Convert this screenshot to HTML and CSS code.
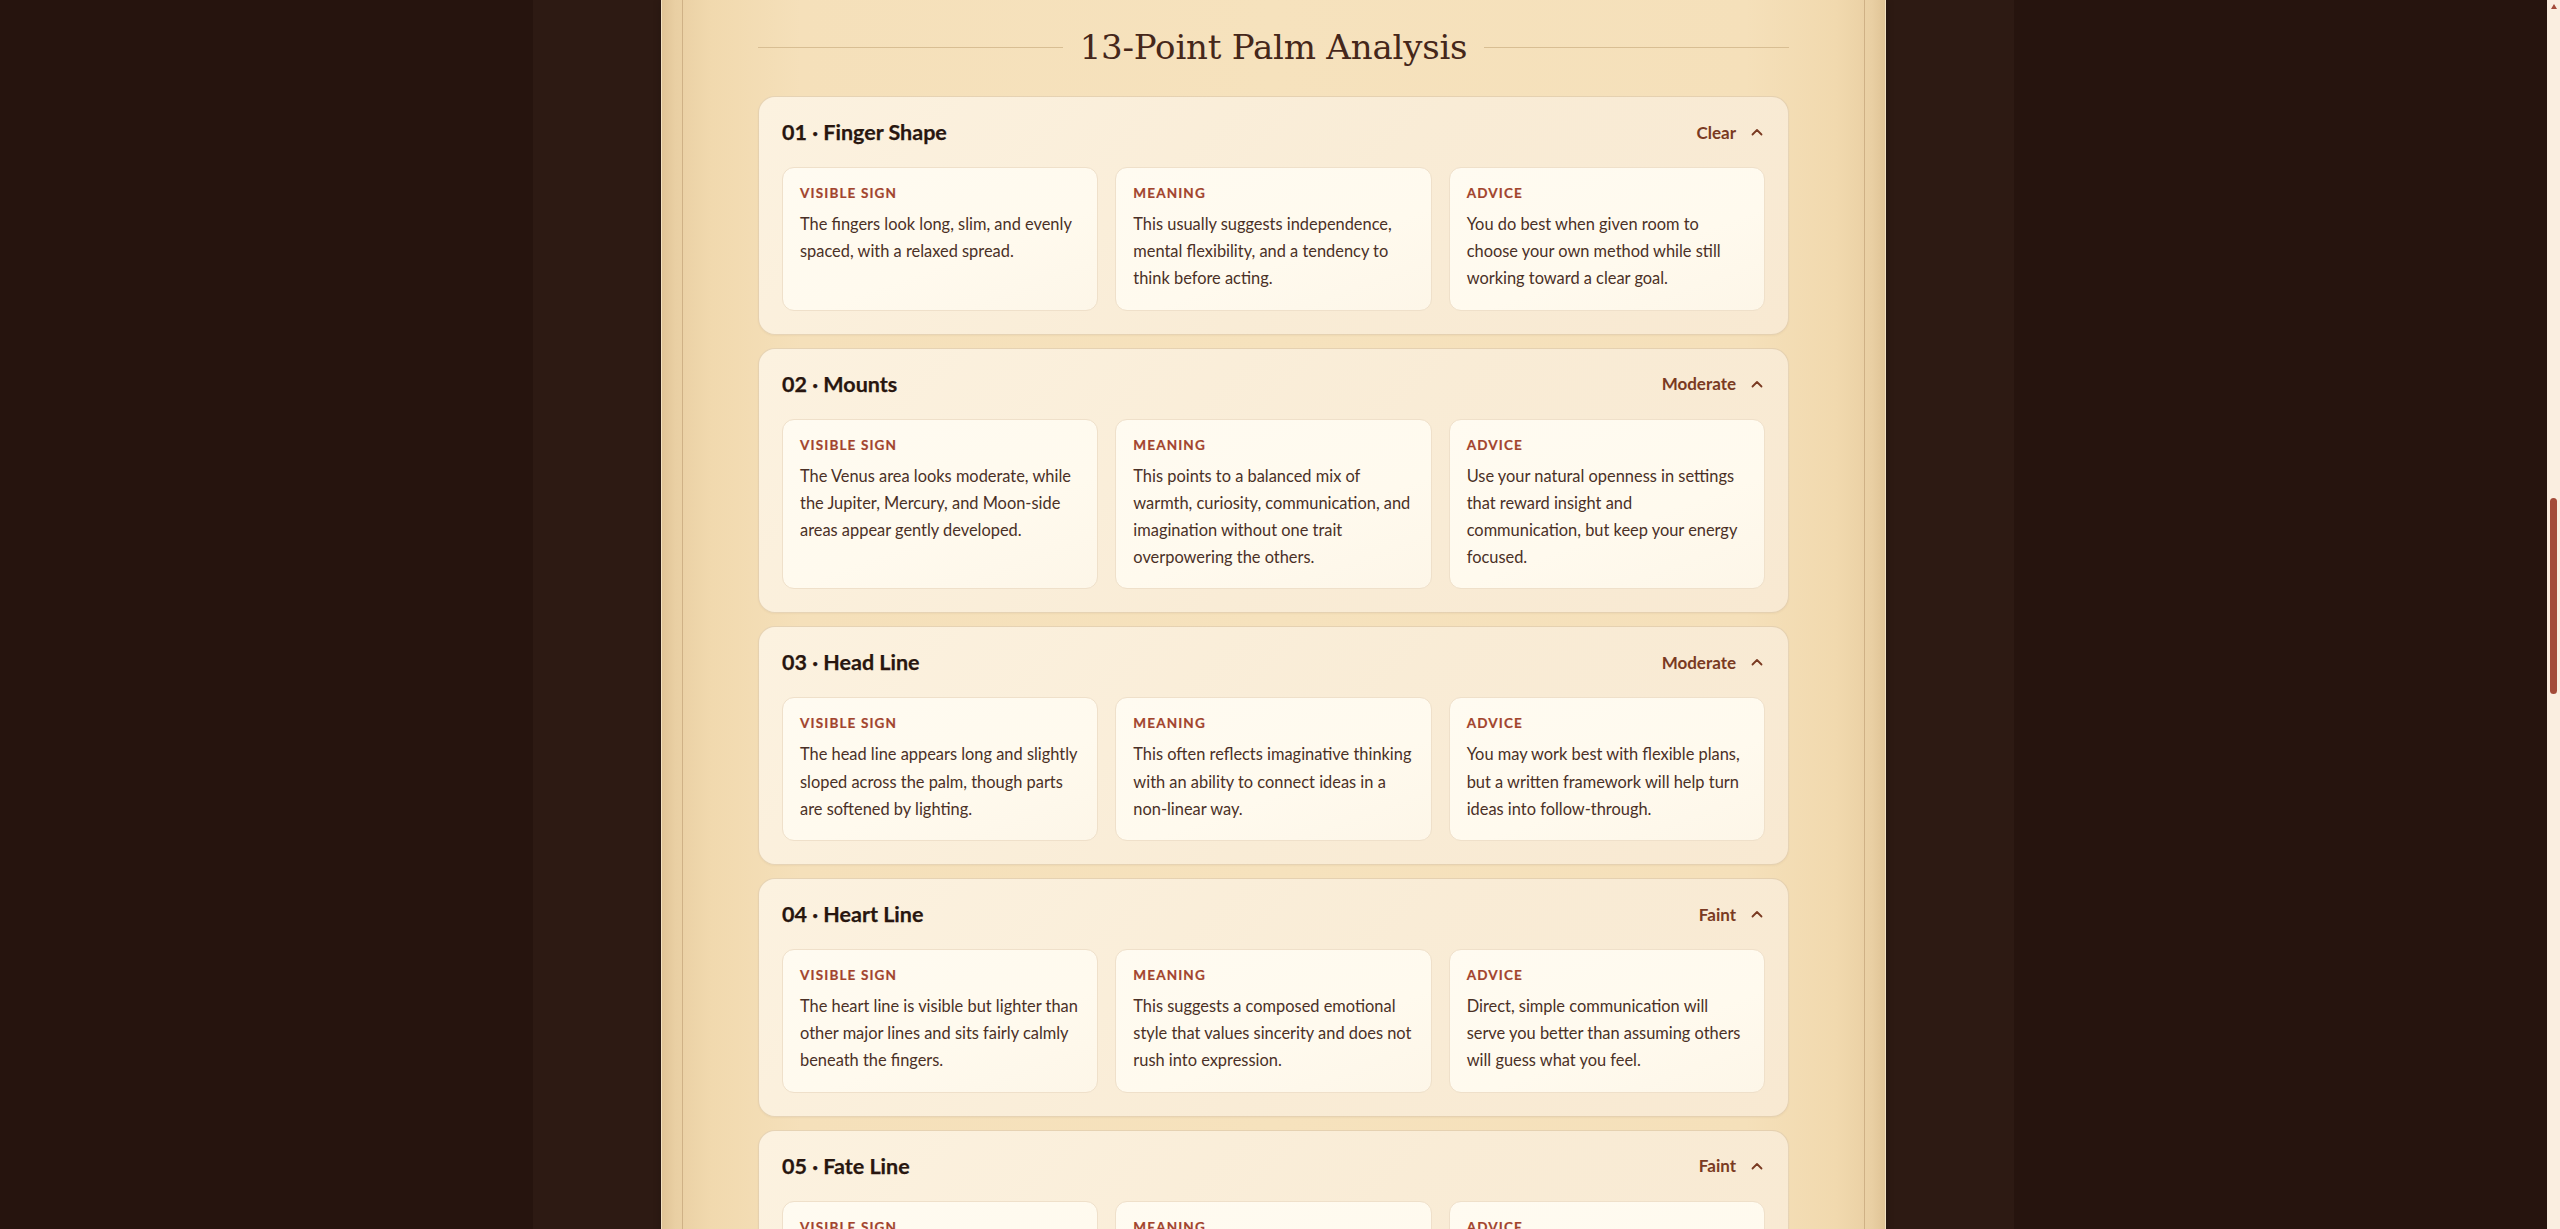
FILE: index.html
```html
<!DOCTYPE html>
<html lang="en">
<head>
<meta charset="utf-8">
<title>13-Point Palm Analysis</title>
<link rel="stylesheet" href="styles.css">
</head>
<body>
<div class="viewport">
  <div class="page">
    <main class="panel">
      <div class="panel-inner">
        <div class="section-title">
          <span class="rule"></span>
          <h2>13-Point Palm Analysis</h2>
          <span class="rule"></span>
        </div>

        <div class="points">
          <section class="point">
            <div class="point-head">
              <h3>01 · Finger Shape</h3>
              <div class="state"><span>Clear</span><svg class="chev" viewBox="0 0 12 8" width="12" height="8"><path d="M1.5 6.5 L6 2 L10.5 6.5"/></svg></div>
            </div>
            <div class="point-grid">
              <div class="cell"><div class="label">Visible Sign</div><p>The fingers look long, slim, and evenly spaced, with a relaxed spread.</p></div>
              <div class="cell"><div class="label">Meaning</div><p>This usually suggests independence, mental flexibility, and a tendency to think before acting.</p></div>
              <div class="cell"><div class="label">Advice</div><p>You do best when given room to choose your own method while still working toward a clear goal.</p></div>
            </div>
          </section>

          <section class="point">
            <div class="point-head">
              <h3>02 · Mounts</h3>
              <div class="state"><span>Moderate</span><svg class="chev" viewBox="0 0 12 8" width="12" height="8"><path d="M1.5 6.5 L6 2 L10.5 6.5"/></svg></div>
            </div>
            <div class="point-grid">
              <div class="cell"><div class="label">Visible Sign</div><p>The Venus area looks moderate, while the Jupiter, Mercury, and Moon-side areas appear gently developed.</p></div>
              <div class="cell"><div class="label">Meaning</div><p>This points to a balanced mix of warmth, curiosity, communication, and imagination without one trait overpowering the others.</p></div>
              <div class="cell"><div class="label">Advice</div><p>Use your natural openness in settings that reward insight and communication, but keep your energy focused.</p></div>
            </div>
          </section>

          <section class="point">
            <div class="point-head">
              <h3>03 · Head Line</h3>
              <div class="state"><span>Moderate</span><svg class="chev" viewBox="0 0 12 8" width="12" height="8"><path d="M1.5 6.5 L6 2 L10.5 6.5"/></svg></div>
            </div>
            <div class="point-grid">
              <div class="cell"><div class="label">Visible Sign</div><p>The head line appears long and slightly sloped across the palm, though parts are softened by lighting.</p></div>
              <div class="cell"><div class="label">Meaning</div><p>This often reflects imaginative thinking with an ability to connect ideas in a non-linear way.</p></div>
              <div class="cell"><div class="label">Advice</div><p>You may work best with flexible plans, but a written framework will help turn ideas into follow-through.</p></div>
            </div>
          </section>

          <section class="point">
            <div class="point-head">
              <h3>04 · Heart Line</h3>
              <div class="state"><span>Faint</span><svg class="chev" viewBox="0 0 12 8" width="12" height="8"><path d="M1.5 6.5 L6 2 L10.5 6.5"/></svg></div>
            </div>
            <div class="point-grid">
              <div class="cell"><div class="label">Visible Sign</div><p>The heart line is visible but lighter than other major lines and sits fairly calmly beneath the fingers.</p></div>
              <div class="cell"><div class="label">Meaning</div><p>This suggests a composed emotional style that values sincerity and does not rush into expression.</p></div>
              <div class="cell"><div class="label">Advice</div><p>Direct, simple communication will serve you better than assuming others will guess what you feel.</p></div>
            </div>
          </section>

          <section class="point">
            <div class="point-head">
              <h3>05 · Fate Line</h3>
              <div class="state"><span>Faint</span><svg class="chev" viewBox="0 0 12 8" width="12" height="8"><path d="M1.5 6.5 L6 2 L10.5 6.5"/></svg></div>
            </div>
            <div class="point-grid">
              <div class="cell"><div class="label">Visible Sign</div><p>The fate line is faint and broken in places, rising only partway up the palm.</p></div>
              <div class="cell"><div class="label">Meaning</div><p>This can indicate a self-directed path shaped more by personal choice than fixed expectations.</p></div>
              <div class="cell"><div class="label">Advice</div><p>Set your own milestones and review them often so that freedom stays purposeful.</p></div>
            </div>
          </section>
        </div>
      </div>
    </main>
  </div>
  <aside class="rail" aria-hidden="true">
    <span class="rail-arrow"></span>
    <span class="rail-thumb"></span>
  </aside>
</div>
</body>
</html>
```

FILE: styles.css
```css
html, body {
  margin: 0;
  padding: 0;
}

html::-webkit-scrollbar {
  width: 0;
  height: 0;
}

body {
  background: #26140e;
  font-family: Lato, "Noto Sans", "Liberation Sans", sans-serif;
  color: #4d3328;
}

.viewport {
  display: grid;
  grid-template-columns: 1fr 13px;
  align-items: start;
}

.rail {
  position: sticky;
  top: 0;
  height: 100vh;
  background: #faeee0;
  display: flex;
  flex-direction: column;
  align-items: center;
}

.rail-arrow {
  margin-top: 4px;
  width: 0;
  height: 0;
  border-left: 3px solid transparent;
  border-right: 3px solid transparent;
  border-bottom: 5px solid #a34b39;
}

.rail-thumb {
  margin-top: 489px;
  width: 7px;
  height: 196px;
  border-radius: 4px;
  background: #a34b39;
}

.page {
  width: 100%;
  max-width: 1481px;
  justify-self: center;
  min-height: 100vh;
  background: #2d1a13;
}

.panel {
  display: block;
  width: 1225px;
  margin: 0 auto;
  padding: 0 21px;
  box-sizing: border-box;
  min-height: 100vh;
  background:
    linear-gradient(90deg,
      #dfc395 0,
      #e9cfa3 14px,
      #f1d9ae 50px,
      #f5e0ba 140px,
      #f6e2bd 50%,
      #f5e0ba calc(100% - 140px),
      #f1d9ae calc(100% - 50px),
      #e9cfa3 calc(100% - 14px),
      #dfc395 100%);
  box-shadow: inset 1px 0 0 #f3e2c2, inset -1px 0 0 #f3e2c2, 0 0 8px rgba(0, 0, 0, 0.2);
}

.panel-inner {
  border-left: 1px solid #cfb186;
  border-right: 1px solid #cfb186;
  padding: 24px 75px 60px;
  min-height: 100vh;
  box-sizing: border-box;
}

.section-title {
  display: flex;
  align-items: center;
  gap: 17px;
  margin-bottom: 26px;
}

.section-title .rule {
  flex: 1;
  height: 1px;
  background: #d8be93;
}

.section-title h2 {
  margin: 0;
  font-family: "DejaVu Serif", "Liberation Serif", serif;
  font-weight: 400;
  font-size: 34px;
  line-height: 46px;
  color: #45271a;
  letter-spacing: -0.2px;
}

.points {
  display: flex;
  flex-direction: column;
  gap: 13px;
}

.point {
  border: 1px solid rgba(214, 188, 148, 0.55);
  border-radius: 17px;
  background: linear-gradient(135deg, #fcf2e0 0%, #f9ecd6 55%, #f8e9d2 100%);
  box-shadow: 0 1px 2px rgba(120, 80, 40, 0.06);
}

.point-head {
  display: flex;
  align-items: center;
  justify-content: space-between;
  padding: 21px 25px 21px 23px;
}

.point-head h3 {
  margin: 0;
  font-size: 21.5px;
  line-height: 28px;
  font-weight: 700;
  color: #28160f;
  -webkit-text-stroke: 0.25px #28160f;
}

.state {
  display: flex;
  align-items: center;
  gap: 15px;
  font-size: 17px;
  font-weight: 700;
  color: #7a3a22;
}

.chev {
  display: block;
  fill: none;
  stroke: #7a3a22;
  stroke-width: 1.8;
  stroke-linecap: round;
  stroke-linejoin: round;
}

.point-grid {
  display: grid;
  grid-template-columns: repeat(3, 1fr);
  gap: 17px;
  padding: 0 23px 23px;
}

.cell {
  background: linear-gradient(160deg, #fffbf1 0%, #fffaee 60%, #fdf6e8 100%);
  border: 1px solid #efe0ca;
  border-radius: 12px;
  padding: 16px 17px 18px;
}

.label {
  font-size: 13.5px;
  line-height: 18px;
  font-weight: 700;
  text-transform: uppercase;
  letter-spacing: 0.085em;
  color: #a2442d;
  margin-bottom: 8px;
  -webkit-text-stroke: 0.2px #a2442d;
}

.cell p {
  margin: 0;
  font-size: 16.4px;
  line-height: 27.2px;
  color: #4a3026;
}
```
